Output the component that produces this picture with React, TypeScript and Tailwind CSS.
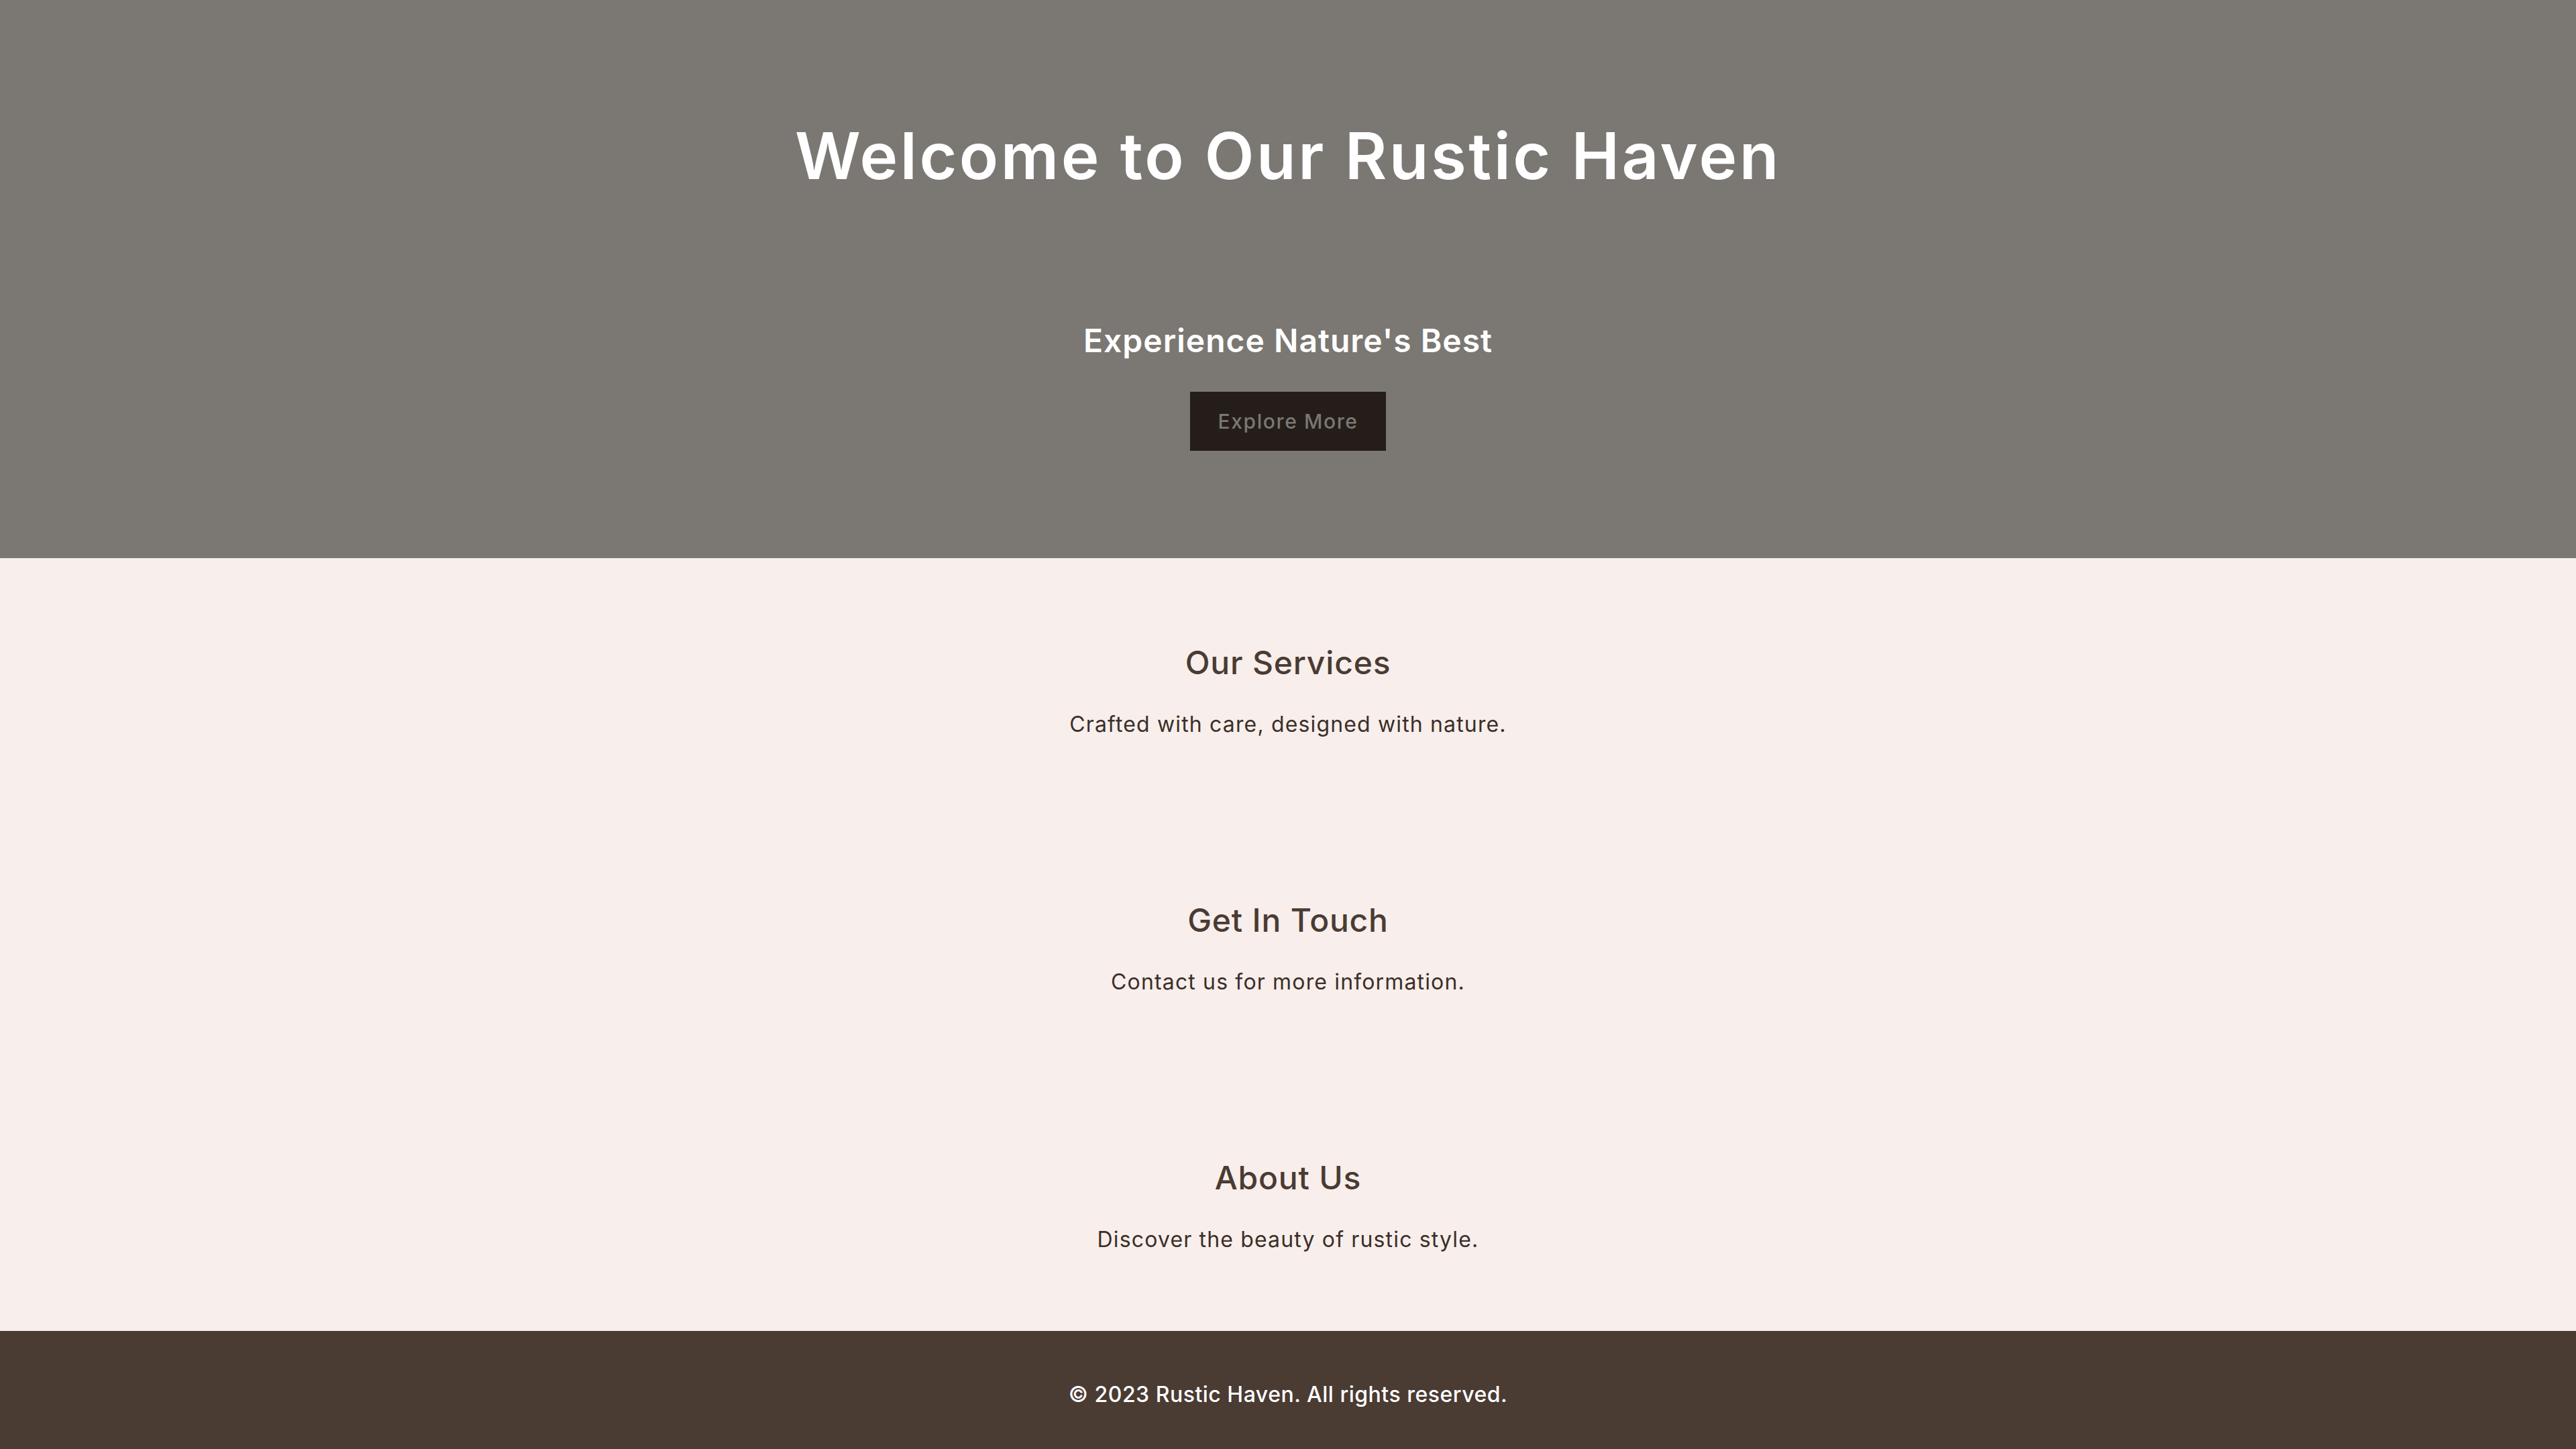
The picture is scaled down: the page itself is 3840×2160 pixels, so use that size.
export default function App() {
  const sections = [
    { title: "Our Services", text: "Crafted with care, designed with nature." },
    { title: "Get In Touch", text: "Contact us for more information." },
    { title: "About Us", text: "Discover the beauty of rustic style." },
  ];

  return (
    <div className="min-h-screen flex flex-col bg-[#f8eeeb] font-['Inter','Open_Sans',sans-serif]">
      <header className="h-[832px] bg-[#7b7773] flex flex-col items-center pt-[184px]">
        <h1 className="text-[96px] leading-none font-semibold text-white tracking-[3.5px]">
          Welcome to Our Rustic Haven
        </h1>
        <h2 className="mt-[204px] text-[48px] leading-none font-semibold text-white tracking-[1px]">
          Experience Nature's Best
        </h2>
        <button className="mt-[52px] h-[88px] px-[41px] bg-[#251d19] text-[#7b7773] text-[30px] font-medium tracking-[1.6px]">
          Explore More
        </button>
      </header>

      <main className="flex flex-col items-center gap-[252px] pt-[132px] pb-[120px]">
        {sections.map((s) => (
          <section key={s.title} className="flex flex-col items-center gap-[52px]">
            <h2 className="text-[48px] leading-none font-medium text-[#4a3b33] tracking-[0.8px]">{s.title}</h2>
            <p className="text-[32px] leading-none text-[#3b2f29] tracking-[1.15px]">{s.text}</p>
          </section>
        ))}
      </main>

      <footer className="h-[176px] bg-[#4a3b33] flex items-center justify-center pt-[14px]">
        <p className="text-[32px] leading-none font-medium text-white tracking-[0.5px]">
          © 2023 Rustic Haven. All rights reserved.
        </p>
      </footer>
    </div>
  );
}
